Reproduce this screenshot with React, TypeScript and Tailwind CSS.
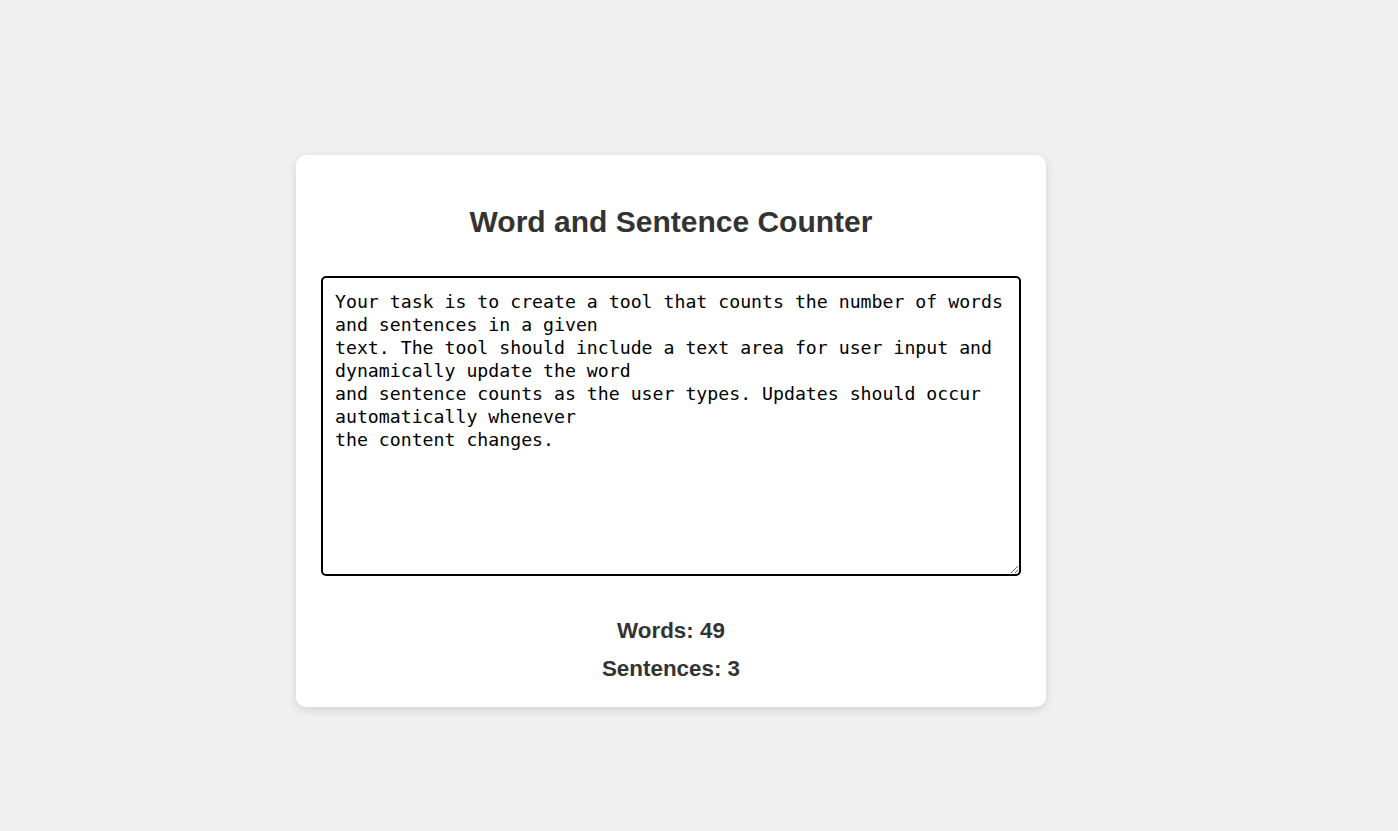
import React, { useEffect, useRef, useState } from "react";

const INITIAL_TEXT =
  "Your task is to create a tool that counts the number of words and sentences in a given\ntext. The tool should include a text area for user input and dynamically update the word\nand sentence counts as the user types. Updates should occur automatically whenever\nthe content changes.";

function countWords(text: string): number {
  const words = text.trim().split(/\s+/).filter((w) => w.length > 0);
  return words.length;
}

function countSentences(text: string): number {
  const sentences = text.split(/[.!?]+/).filter((s) => s.trim().length > 0);
  return sentences.length;
}

export default function App() {
  const [text, setText] = useState(INITIAL_TEXT);
  const areaRef = useRef<HTMLTextAreaElement>(null);

  // put the caret at the end, like the user just typed
  useEffect(() => {
    const el = areaRef.current;
    if (!el) return;
    el.focus();
    el.setSelectionRange(el.value.length, el.value.length);
  }, []);

  return (
    <div className="min-h-[831px] bg-[#f0f0f0] pt-[155px] pl-[296px] font-['Liberation_Sans',Arial,sans-serif]">
      <div className="w-[750px] rounded-[10px] bg-white px-[25px] pt-[50px] pb-[25px] shadow-[0_3px_10px_rgba(0,0,0,0.12)]">
        <h1 className="mb-[36px] text-center text-[30px] font-bold leading-[34.5px] text-[#333]">
          Word and Sentence Counter
        </h1>
        <textarea
          ref={areaRef}
          className="block h-[300px] w-[700px] rounded-[5px] border-2 border-black px-[12px] py-[12px] font-['DejaVu_Sans_Mono',monospace] text-[18.2px] leading-[23px] text-black outline-none"
          value={text}
          onChange={(e) => setText(e.target.value)}
        />
        <div className="mt-[42px] text-center text-[22.4px] font-bold leading-[25.8px] text-[#333]">
          <p>Words: {countWords(text)}</p>
          <p className="mt-[12.6px]">Sentences: {countSentences(text)}</p>
        </div>
      </div>
    </div>
  );
}
